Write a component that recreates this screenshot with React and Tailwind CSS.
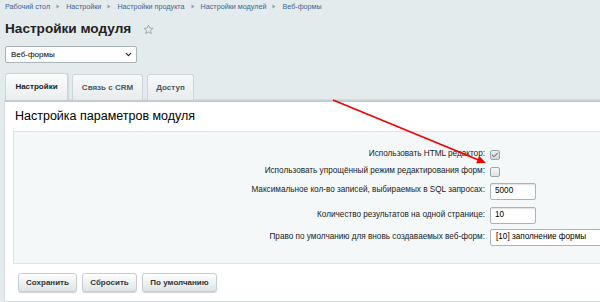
import { ChevronDown, Check } from 'lucide-react';

const crumbs = ['Рабочий стол', 'Настройки', 'Настройки продукта', 'Настройки модулей', 'Веб-формы'];

function Sep() {
  return (
    <svg width="4" height="5" viewBox="0 0 4 5" className="mx-[6px]">
      <path d="M0.5 0.5 L3.5 2.5 L0.5 4.5 Z" fill="#8e9da3" />
    </svg>
  );
}

function Checkbox({ checked }) {
  return (
    <div className={`w-[10px] h-[10px] rounded-[2px] border border-[#9aa6aa] bg-gradient-to-b ${checked ? 'from-[#e9edee] to-[#cfd6d8]' : 'from-[#f4f6f7] to-[#dfe4e6]'} flex items-center justify-center`}>
      {checked && <Check size={8} strokeWidth={3} className="text-[#555]" />}
    </div>
  );
}

function Row({ label, children, h = 'h-[17px]', top = false, className = '' }) {
  return (
    <div className={`flex ${top ? 'items-start' : 'items-center'} ${h} ${className}`}>
      <div className={`w-[471px] text-right text-[8.2px] text-[#222] leading-none ${top ? 'pt-[3px]' : ''}`}>{label}</div>
      <div className="ml-[5px]">{children}</div>
    </div>
  );
}

function Input({ value }) {
  return (
    <div className="w-[46px] h-[17px] bg-white border border-[#a9b4b8] rounded-[2px] shadow-[inset_0_1px_1px_rgba(0,0,0,0.12)] flex items-center pl-[4px] text-[8.2px] text-black">
      {value}
    </div>
  );
}

function Btn({ children, w }) {
  return (
    <div className={`${w} h-[19px] rounded-[3px] border border-[#c4cdd0] bg-gradient-to-b from-[#ffffff] to-[#dde4e6] shadow-[0_1px_1px_rgba(0,0,0,0.18)] flex items-center justify-center text-[8px] font-bold text-[#333]`}>
      {children}
    </div>
  );
}

export default function App() {
  return (
    <div className="relative w-[600px] h-[302px] overflow-hidden bg-[#e4ebed] font-['Liberation_Sans',Arial,sans-serif]">
      {/* breadcrumbs */}
      <div className="h-[14px] pl-[5px] flex items-center text-[7.2px] leading-none text-[#3b6493]">
        {crumbs.map((c, i) => (
          <div key={c} className="flex items-center">
            {i > 0 && <Sep />}
            <span>{c}</span>
          </div>
        ))}
      </div>

      {/* title */}
      <div className="h-[30px] pl-[5px] flex items-center">
        <span className="text-[13.6px] font-bold text-[#222] leading-none">Настройки модуля</span>
        <svg width="11" height="11" viewBox="0 0 24 24" className="ml-[12px] mt-[1px]">
          <path d="M12 2.5l2.9 6.3 6.8.7-5.1 4.6 1.5 6.7L12 17.4l-6.1 3.4 1.5-6.7-5.1-4.6 6.8-.7z" fill="none" stroke="#9aa3a7" strokeWidth="2" strokeLinejoin="round" />
        </svg>
      </div>

      {/* module select */}
      <div className="mt-[2px] ml-[5px] w-[132px] h-[17px] bg-white border border-[#a9b4b8] rounded-[2px] flex items-center justify-between pl-[5px] pr-[3px] text-[8px] text-black">
        <span>Веб-формы</span>
        <ChevronDown size={9} strokeWidth={3} className="text-[#222]" />
      </div>

      {/* tabs */}
      <div className="mt-[10px] ml-[5px] flex gap-[4px] h-[27px] items-end">
        <div className="w-[63px] h-[27px] rounded-t-[3px] border border-b-0 border-[#cdd5d8] bg-gradient-to-b from-[#fbfcfc] to-[#e9eef0] flex items-center justify-center text-[8px] font-bold text-[#1d2224] shadow-[1px_0_1px_rgba(0,0,0,0.08)]">
          Настройки
        </div>
        <div className="w-[71px] h-[26px] rounded-t-[3px] border border-b-0 border-[#cdd5d8] bg-gradient-to-b from-[#f7f9f9] to-[#e6ecee] flex items-center justify-center text-[8px] font-bold text-[#4b5659]">
          Связь с CRM
        </div>
        <div className="w-[47px] h-[26px] rounded-t-[3px] border border-b-0 border-[#cdd5d8] bg-gradient-to-b from-[#f7f9f9] to-[#e6ecee] flex items-center justify-center text-[8px] font-bold text-[#4b5659]">
          Доступ
        </div>
      </div>

      {/* panel */}
      <div className="ml-[5px] w-[640px] bg-white border-t-2 border-[#c3ccce] shadow-[0_0_2px_rgba(0,0,0,0.15)]">
        <div className="h-[29px] pl-[10px] flex items-center text-[12.5px] text-black leading-none">
          Настройка параметров модуля
        </div>
        <div className="ml-[8px] border border-[#dfe5e7] bg-[#f5f8f9] pt-[14px] pb-[17px]">
          <Row label="Использовать HTML редактор:">
            <Checkbox checked />
          </Row>
          <Row label="Использовать упрощённый режим редактирования форм:">
            <Checkbox />
          </Row>
          <Row label="Максимальное кол-во записей, выбираемых в SQL запросах:" top className="mt-[3px]">
            <Input value="5000" />
          </Row>
          <Row label="Количество результатов на одной странице:" className="mt-[7px]">
            <Input value="10" />
          </Row>
          <Row label="Право по умолчанию для вновь создаваемых веб-форм:" className="mt-[5px]">
            <div className="w-[140px] h-[17px] bg-white border border-[#a9b4b8] rounded-[2px] flex items-center pl-[5px] text-[8.2px] text-black">
              [10] заполнение формы
            </div>
          </Row>
        </div>
        <div className="flex gap-[5px] pl-[13px] pt-[9px] pb-[9px]">
          <Btn w="w-[59px]">Сохранить</Btn>
          <Btn w="w-[55px]">Сбросить</Btn>
          <Btn w="w-[75px]">По умолчанию</Btn>
        </div>
      </div>

      {/* annotation arrow */}
      <svg className="absolute left-0 top-0 pointer-events-none" width="600" height="302">
        <line x1="333" y1="100" x2="478" y2="159.8" stroke="#f20000" strokeWidth="1.6" />
        <polygon points="486,163 476.2,163.2 479.2,156" fill="#f20000" />
      </svg>
    </div>
  );
}
